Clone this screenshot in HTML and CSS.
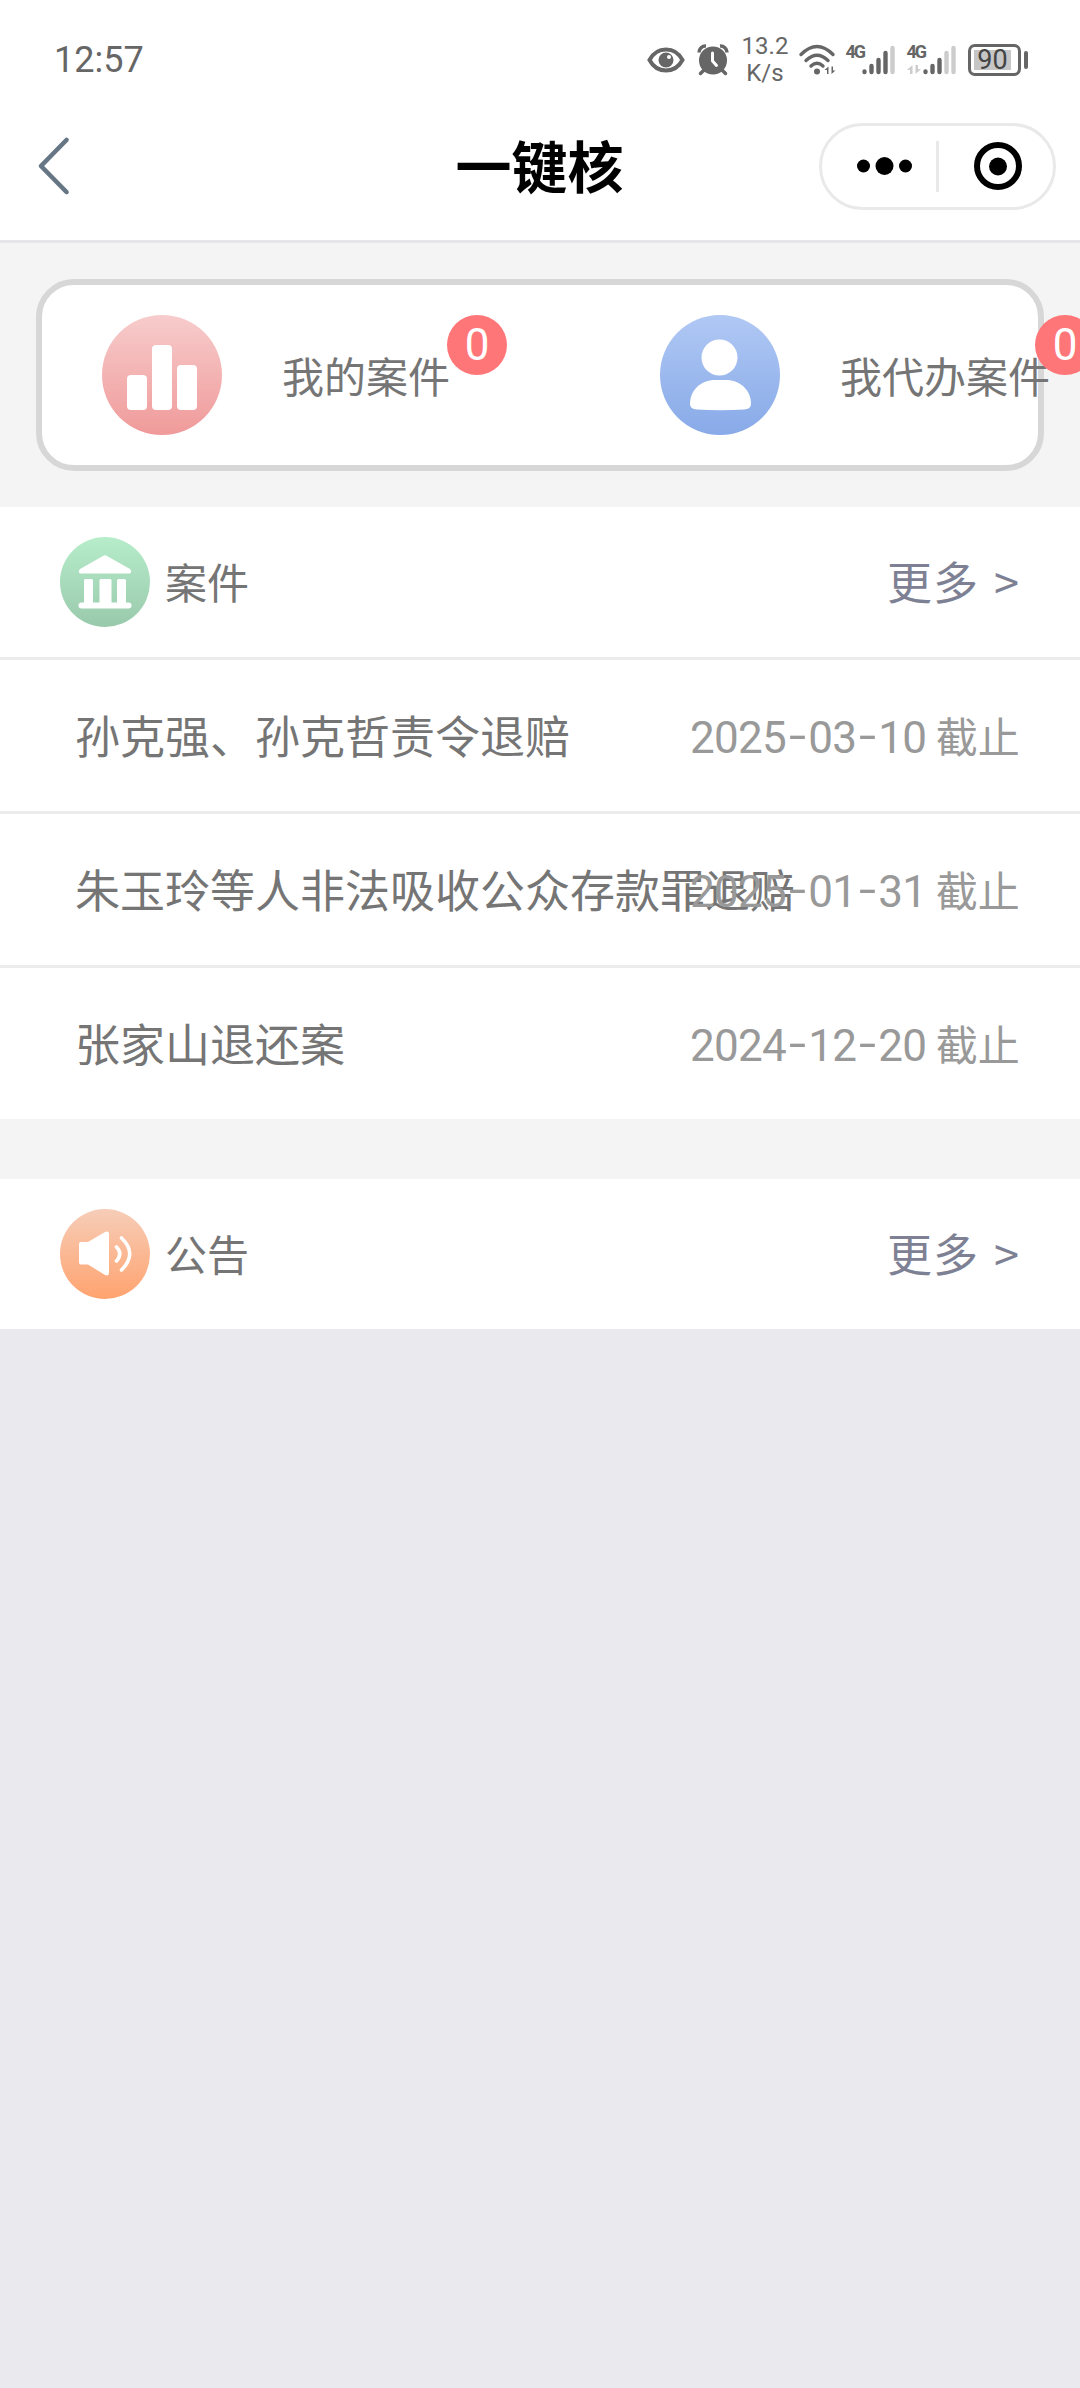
FILE: index.html
```html
<!DOCTYPE html>
<html lang="zh-CN">
<head>
    <meta charset="UTF-8">
    <meta name="viewport" content="width=device-width, initial-scale=1.0">
    <title>一键核</title>
    <link rel="stylesheet" href="styles.css">
</head>
<body>
<div class="page">
    <header class="top">
        <div class="status-bar">
            <span class="time">12:57</span>
            <svg class="icon-eye" width="38" height="26" viewBox="0 0 38 26">
                <path d="M2.500 13C10 -1 28 -1 35.500 13C28 27 10 27 2.500 13Z" fill="none" stroke="#666" stroke-width="4"/>
                <circle cx="19" cy="13" r="7.500" fill="#666"/>
                <circle cx="22" cy="10" r="2" fill="#fff"/>
            </svg>
            <svg class="icon-alarm" width="32" height="32" viewBox="0 0 32 32">
                <path d="M8 25L3.500 29.500M24 25L28.500 29.500" stroke="#666" stroke-width="3.500" stroke-linecap="round"/>
                <path d="M2 8.500A6.500 6.500 0 0 1 9 2M30 8.500A6.500 6.500 0 0 0 23 2" fill="none" stroke="#666" stroke-width="3.500"/>
                <circle cx="16" cy="16.500" r="14" fill="#666"/>
                <path d="M15.500 9V17L19.500 21.500" fill="none" stroke="#fff" stroke-width="3" stroke-linecap="round"/>
            </svg>
            <div class="speed"><span>13.2</span><span>K/s</span></div>
            <svg class="icon-wifi" width="38" height="32" viewBox="0 0 38 32">
                <g fill="none" stroke="#666" stroke-width="3.400" stroke-linecap="round">
                    <path d="M2 10.500Q18 -5.500 34 10.500"/>
                    <path d="M7 16.500Q18 6 29 16.500"/>
                    <path d="M12 22Q18 16.500 24 22"/>
                </g>
                <circle cx="18" cy="27.500" r="3" fill="#666"/>
                <path d="M25.500 26L29.500 22.500V30H28V26ZM36.500 26.500L32.500 30V22.500H34V26.500Z" fill="#666"/>
            </svg>
            <svg class="icon-signal" width="52" height="34" viewBox="0 0 52 34">
                <text x="0.500" y="15" class="net">4G</text>
                <g stroke="#666" stroke-width="4.400" stroke-linecap="round">
                    <path d="M19.500 28.500V29M26.500 23V29M33.500 17V29M40.500 10V29"/>
                    <path d="M47.500 5V29" stroke="#ccc"/>
                </g>
            </svg>
            <svg class="icon-signal second" width="52" height="34" viewBox="0 0 52 34">
                <text x="0.500" y="15" class="net">4G</text>
                <path d="M1 27L6.500 22V31H4V27ZM15 26L9.500 31V22H12V26Z" fill="#ccc"/>
                <g stroke="#666" stroke-width="4.400" stroke-linecap="round">
                    <path d="M19.500 28.500V29M26.500 23V29M33.500 17V29"/>
                    <path d="M40.500 10V29M47.500 5V29" stroke="#ccc"/>
                </g>
            </svg>
            <div class="battery"><span>90</span></div>
            <i class="battery-tip"></i>
        </div>

        <nav class="nav">
            <svg class="back" width="34" height="60" viewBox="0 0 34 60">
                <path d="M29.500 4L4 30L29.500 56" fill="none" stroke="#667684" stroke-width="4.600" stroke-linecap="round" stroke-linejoin="round"/>
            </svg>
            <h1>一键核</h1>
            <div class="capsule">
                <svg width="55" height="18" viewBox="0 0 55 18">
                    <circle cx="6.500" cy="9" r="6.500"/>
                    <circle cx="27.500" cy="9" r="9"/>
                    <circle cx="48.500" cy="9" r="6.500"/>
                </svg>
                <i class="capsule-line"></i>
                <svg width="48" height="48" viewBox="0 0 48 48">
                    <circle cx="24" cy="24" r="21" fill="none" stroke="#000" stroke-width="6"/>
                    <circle cx="24" cy="24.500" r="9"/>
                </svg>
            </div>
        </nav>
    </header>

    <section class="summary">
        <div class="card">
            <div class="entry">
                <svg width="120" height="120" viewBox="0 0 120 120">
                    <defs>
                        <linearGradient id="red" x1="0" y1="0" x2="0" y2="1">
                            <stop offset="0" stop-color="#f7cccc"/>
                            <stop offset="1" stop-color="#f09a9a"/>
                        </linearGradient>
                    </defs>
                    <circle cx="60" cy="60" r="60" fill="url(#red)"/>
                    <g fill="#fff">
                        <rect x="25" y="60" width="20" height="35" rx="4"/>
                        <rect x="50" y="30" width="20" height="65" rx="4"/>
                        <rect x="75" y="50" width="20" height="45" rx="4"/>
                    </g>
                </svg>
                <span class="entry-text">我的案件<b class="badge">0</b></span>
            </div>
            <div class="entry">
                <svg width="120" height="120" viewBox="0 0 120 120">
                    <defs>
                        <linearGradient id="blue" x1="0" y1="0" x2="0" y2="1">
                            <stop offset="0" stop-color="#b0c8f4"/>
                            <stop offset="1" stop-color="#88aae8"/>
                        </linearGradient>
                    </defs>
                    <circle cx="60" cy="60" r="60" fill="url(#blue)"/>
                    <circle cx="59.500" cy="42.500" r="18" fill="#fff"/>
                    <path d="M30 89C30 75 41 65 55 65H66C80 65 91 75 91 89Q91 94 84 94.500Q60 96 37 94.500Q30 94 30 89Z" fill="#fff"/>
                </svg>
                <span class="entry-text">我代办案件<b class="badge badge-agent">0</b></span>
            </div>
        </div>
    </section>

    <section class="panel">
        <div class="panel-head">
            <svg width="90" height="90" viewBox="0 0 90 90">
                <defs>
                    <linearGradient id="green" x1="0" y1="0" x2="0" y2="1">
                        <stop offset="0" stop-color="#b7edcb"/>
                        <stop offset="1" stop-color="#98c9ab"/>
                    </linearGradient>
                </defs>
                <circle cx="45" cy="45" r="45" fill="url(#green)"/>
                <g fill="#fff">
                    <path d="M43 19Q45 17.500 47 19L70 32Q72 34 71 35.500Q70.500 36.500 69 36.500H21Q19.500 36.500 19 35.500Q18 34 20 32Z"/>
                    <rect x="24" y="42" width="9" height="26" rx="1.500"/>
                    <rect x="39.500" y="42" width="12" height="26" rx="1.500"/>
                    <rect x="57" y="42" width="9" height="26" rx="1.500"/>
                    <rect x="18.500" y="65.500" width="53" height="6" rx="3"/>
                </g>
            </svg>
            <h2>案件</h2>
            <a class="more">更多 &gt;</a>
        </div>
        <ul class="list">
            <li>
                <span class="name">孙克强、孙克哲责令退赔</span>
                <span class="date"><time>2025<i>-</i>03<i>-</i>10</time> 截止</span>
            </li>
            <li>
                <span class="name">朱玉玲等人非法吸收公众存款罪退赔</span>
                <span class="date"><time>2025<i>-</i>01<i>-</i>31</time> 截止</span>
            </li>
            <li>
                <span class="name">张家山退还案</span>
                <span class="date"><time>2024<i>-</i>12<i>-</i>20</time> 截止</span>
            </li>
        </ul>
    </section>

    <section class="panel notice">
        <div class="panel-head">
            <svg width="90" height="90" viewBox="0 0 90 90">
                <defs>
                    <linearGradient id="orange" x1="0" y1="0" x2="0" y2="1">
                        <stop offset="0" stop-color="#f6cdb8"/>
                        <stop offset="1" stop-color="#ffa36f"/>
                    </linearGradient>
                </defs>
                <circle cx="45" cy="45" r="45" fill="url(#orange)"/>
                <path d="M21 33H28L45 23Q49 21.500 49 25V64Q49 67.500 45 66L28 55.500H21Q19 55.500 19 53.500V35Q19 33 21 33Z" fill="#fff"/>
                <path d="M56.500 38Q63 44.500 56.500 52M61.500 29Q78 44.500 61.500 61" fill="none" stroke="#fff" stroke-width="3.600" stroke-linecap="round"/>
            </svg>
            <h2>公告</h2>
            <a class="more">更多 &gt;</a>
        </div>
    </section>
</div>
</body>
</html>
```
FILE: styles.css
```css
* {
    box-sizing: border-box;
}

body {
    margin: 0;
    background-color: #e9e9ee;
    font-family: "Noto Sans CJK SC", sans-serif;
    color: #757575;
}

.page {
    width: 1080px;
    min-height: 2388px;
    overflow: hidden;
}

h1, h2, ul {
    margin: 0;
    padding: 0;
}

svg {
    display: block;
    flex-shrink: 0;
    overflow: visible;
}

i {
    font-style: normal;
}

.top {
    height: 243px;
    background-color: #fff;
    border-bottom: 3px solid #e6e6e8;
}

/* Status bar */
.status-bar {
    display: flex;
    align-items: center;
    height: 120px;
    padding: 0 52px 0 54px;
    font-family: Roboto, sans-serif;
    color: #666;
}

.time {
    font-size: 36px;
    margin-right: auto;
}

.icon-alarm {
    margin-left: 12px;
}

.speed {
    display: flex;
    flex-direction: column;
    align-items: center;
    width: 48px;
    margin: 0 10px 0 12px;
    font-size: 24px;
    line-height: 27px;
}

.icon-signal {
    margin-left: 8px;
}

.icon-signal.second {
    margin-left: 9px;
}

.net {
    font-size: 18px;
    font-weight: 700;
    fill: #666;
    letter-spacing: -2px;
}

.battery {
    display: flex;
    width: 53px;
    height: 32px;
    margin-left: 10px;
    padding: 3px;
    border: 3px solid #666;
    border-radius: 7px;
}

.battery span {
    width: 37px;
    height: 20px;
    background-color: #c6c6c6;
    color: #444;
    font-size: 27px;
    line-height: 21px;
    text-align: center;
}

.battery-tip {
    width: 4px;
    height: 18px;
    margin-left: 3px;
    border-radius: 2px;
    background-color: #666;
}

/* Navigation */
.nav {
    display: grid;
    grid-template-columns: 1fr auto 1fr;
    align-items: center;
    height: 92px;
    padding: 0 24px 0 37px;
}

.nav h1 {
    font-size: 56px;
    font-weight: 700;
    line-height: 80px;
    color: #000;
    margin: 0 0 4px -14px;
}

.capsule {
    display: flex;
    align-items: center;
    justify-self: end;
    width: 237px;
    height: 87px;
    padding-left: 35px;
    border: 3px solid #e9e9e9;
    border-radius: 44px;
}

.capsule-line {
    width: 3px;
    height: 51px;
    margin: 0 35px 0 24px;
    background-color: #e9e9e9;
}

/* Summary card */
.summary {
    height: 264px;
    padding: 36px;
    background-color: #f4f4f4;
}

.card {
    display: flex;
    width: 1008px;
    height: 192px;
    padding-left: 60px;
    background-color: #fff;
    border: 6px solid #d7d7d7;
    border-radius: 38px;
}

.entry {
    display: flex;
    align-items: center;
    flex: 0 0 558px;
}

.entry-text {
    position: relative;
    margin-left: 60px;
    font-size: 42px;
    line-height: 60px;
    white-space: nowrap;
}

.badge {
    position: absolute;
    left: 100%;
    bottom: 30px;
    width: 60px;
    height: 60px;
    margin-left: -3px;
    border-radius: 50%;
    background-color: #ff7678;
    color: #fff;
    font-family: Roboto, sans-serif;
    font-size: 44px;
    font-weight: 400;
    line-height: 60px;
    text-align: center;
}

.badge-agent {
    margin-left: -15px;
}

/* Panels */
.panel {
    background-color: #fff;
}

.panel-head {
    display: flex;
    align-items: center;
    height: 150px;
    padding: 0 60px;
}

.panel-head h2 {
    margin: 0 0 3px 15px;
    font-size: 42px;
    font-weight: 400;
}

.more {
    margin: 0 0 3px auto;
    font-size: 45px;
    letter-spacing: 1px;
    word-spacing: 4px;
    color: #7e8194;
}

.list {
    list-style: none;
}

.list li {
    display: flex;
    align-items: center;
    height: 154px;
    padding: 0 60px 3px 75px;
    border-top: 3px solid #ececec;
}

.name {
    width: 615px;
    font-size: 45px;
    white-space: nowrap;
}

.date {
    font-size: 42px;
    color: #999;
    white-space: nowrap;
}

.date time {
    font-family: Roboto, sans-serif;
    font-size: 44px;
    letter-spacing: -0.7px;
}

.date i {
    display: inline-block;
    width: 22px;
    text-align: center;
    transform: translateY(-2px) scaleX(1.4);
}

.notice {
    border-top: 60px solid #f4f4f4;
}
```
